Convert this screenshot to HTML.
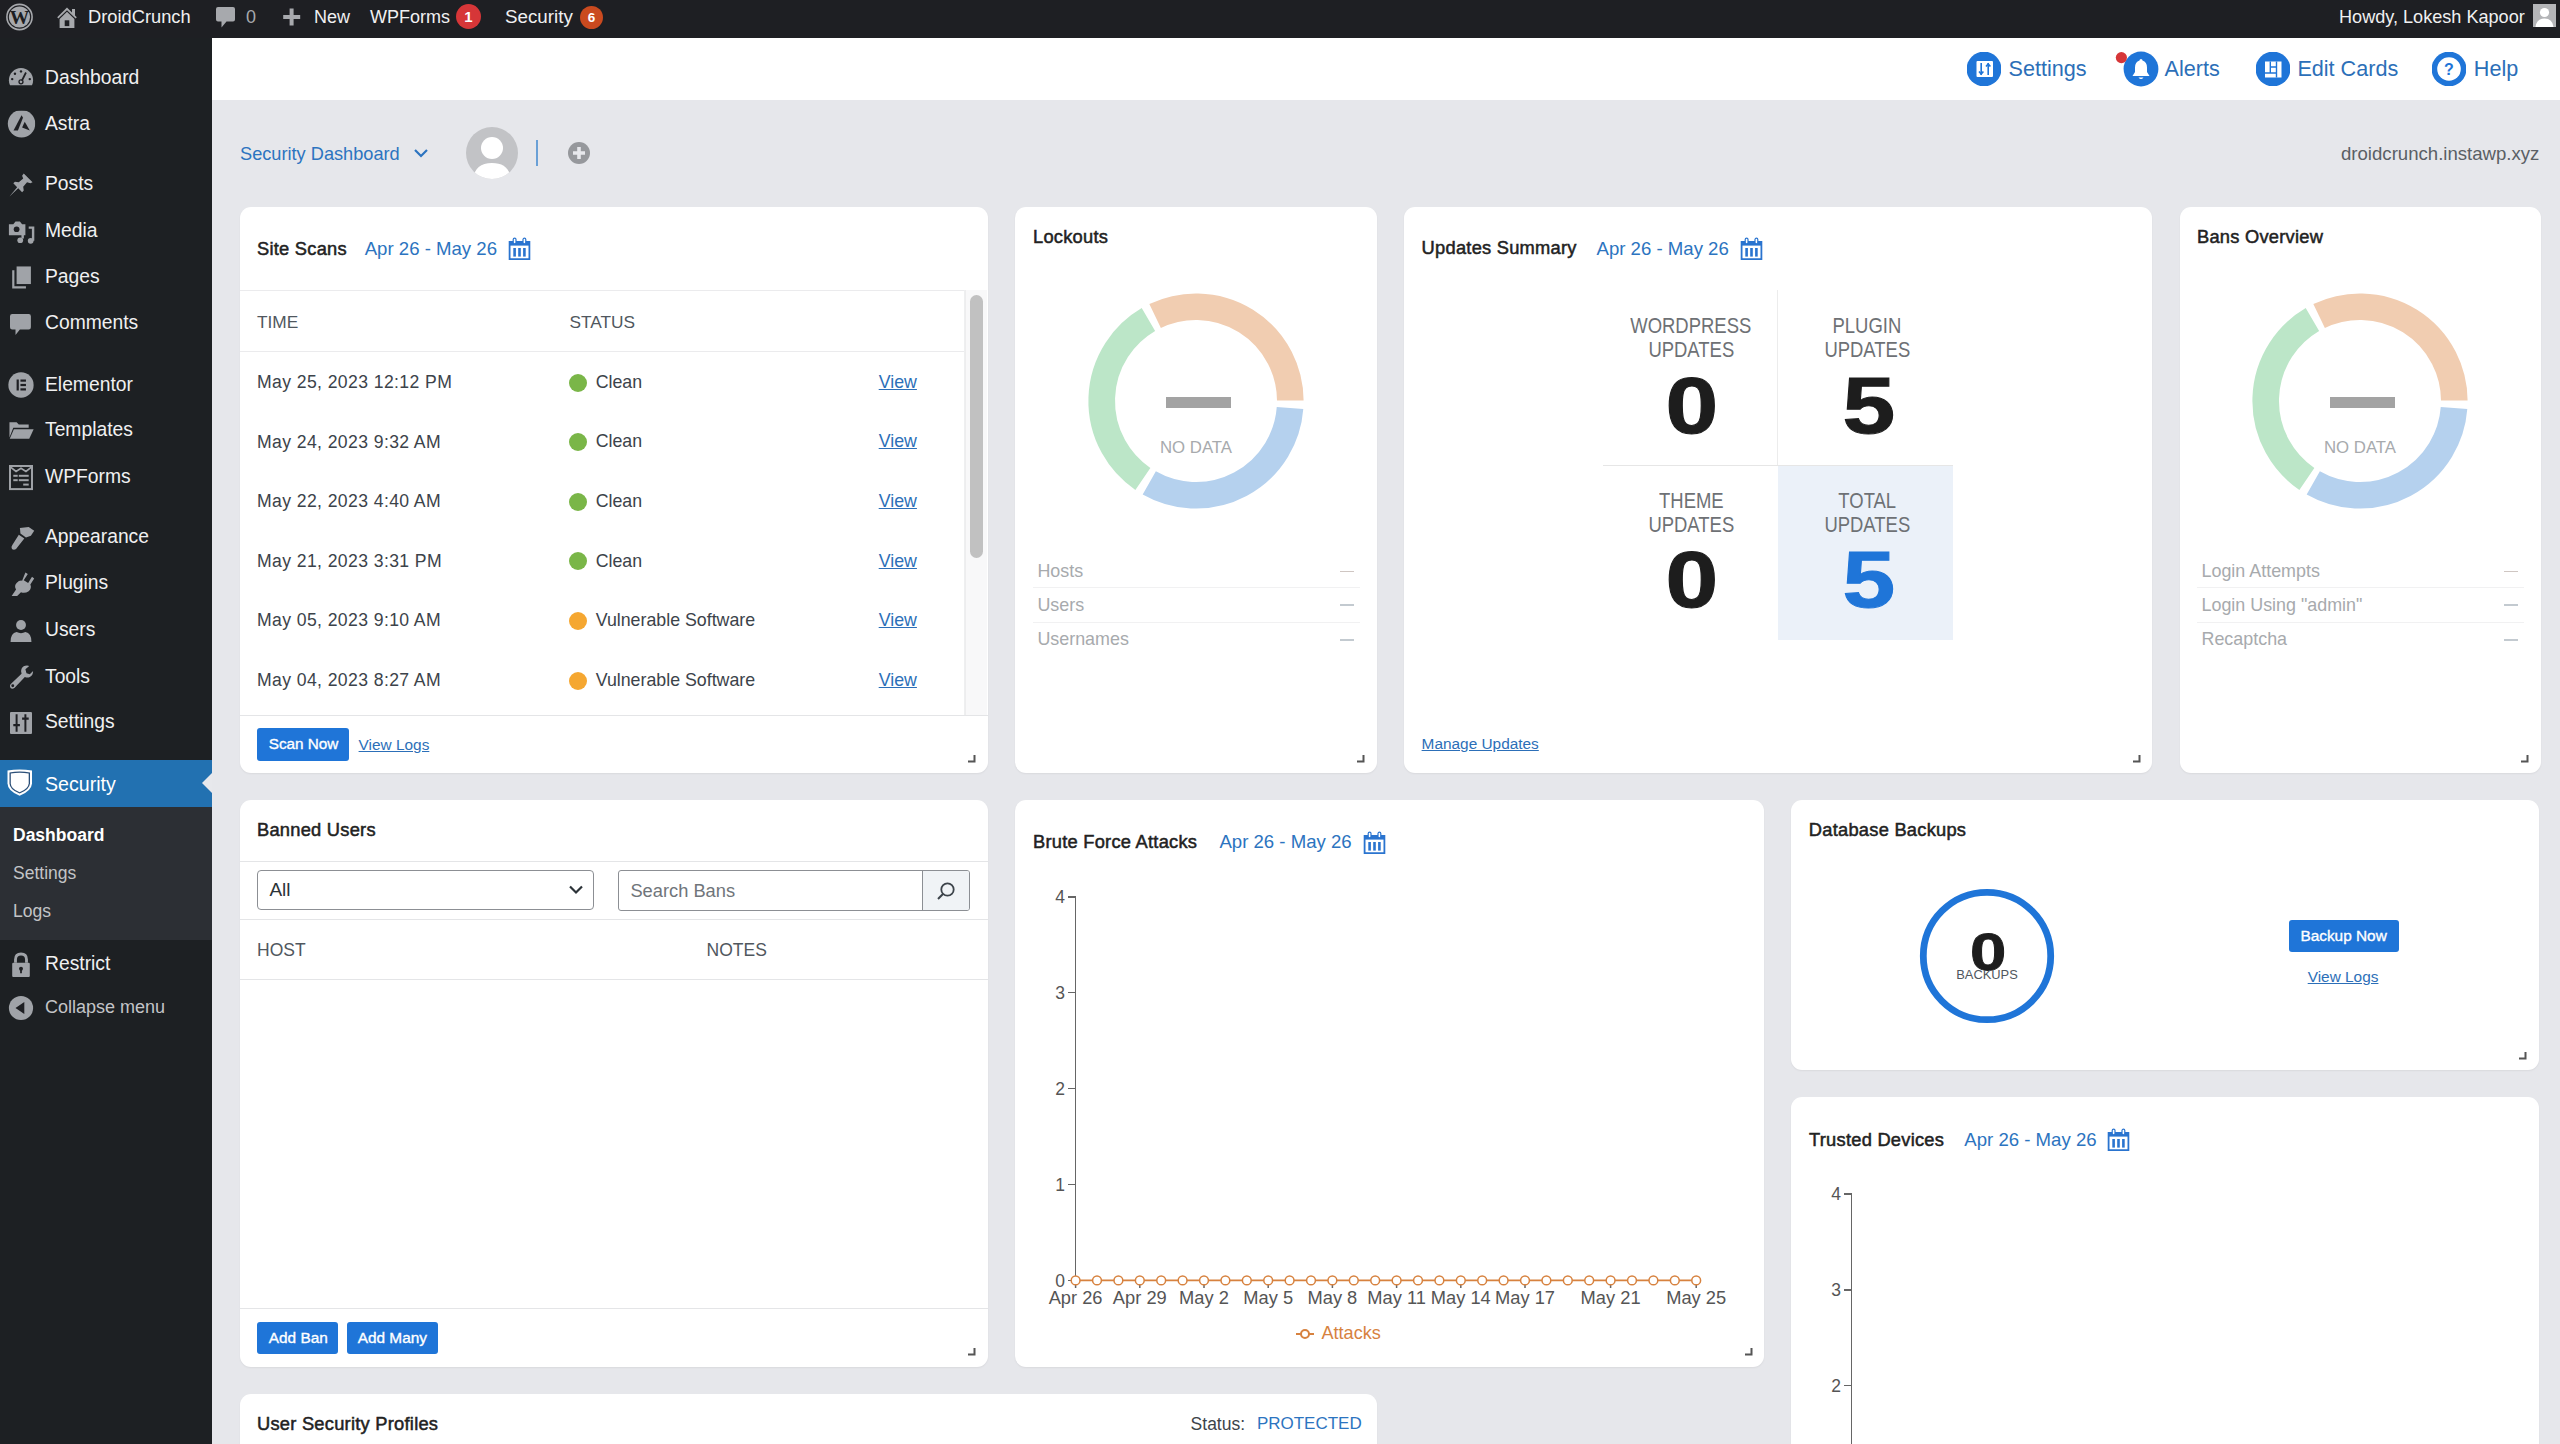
<!DOCTYPE html>
<html><head><meta charset="utf-8">
<style>
*{box-sizing:border-box;margin:0;padding:0}
html,body{width:2560px;height:1444px;overflow:hidden;background:#e6e7eb;font-family:"Liberation Sans",sans-serif;color:#1d2327}
.abs{position:absolute}
#adminbar{position:absolute;left:0;top:0;width:2560px;height:38px;background:#1e1f23;color:#f0f0f1;font-size:18px}
#adminbar .t{position:absolute;top:7px;line-height:20px;white-space:nowrap}
#sidebar{position:absolute;left:0;top:38px;width:212px;height:1406px;background:#1d2023}
.mi{position:absolute;left:45px;color:#f0f0f1;font-size:19px;line-height:22px;white-space:nowrap}
.ic{position:absolute;left:10px}
#hdr{position:absolute;left:212px;top:38px;width:2348px;height:62px;background:#fff}
.card{position:absolute;background:#fff;border-radius:11px;box-shadow:0 1px 2px rgba(0,0,0,.06)}
.ttl{position:absolute;font-weight:bold;font-size:18px;line-height:22px;color:#1d2327;white-space:nowrap}
.date{position:absolute;font-size:18.5px;line-height:22px;color:#2271b1;white-space:nowrap}
.t{white-space:nowrap}
</style></head><body>
<div id="adminbar">
<svg class="abs" style="left:5px;top:3px" width="30" height="30" viewBox="0 0 30 30"><circle cx="14.5" cy="14" r="12.6" fill="none" stroke="#a7a9ad" stroke-width="1.6"/><circle cx="14.5" cy="14" r="10.6" fill="#a7a9ad"/><text x="14.5" y="21.2" text-anchor="middle" font-family="Liberation Serif" font-weight="bold" font-size="19.5" fill="#1e1f23">W</text></svg>
<svg class="abs" style="left:56px;top:6px" width="22" height="23" viewBox="0 0 22 23"><path d="M1.2 11.2 L11 1.5 L16 6.5 V3 H19 V9.5 L20.8 11.2 L19.6 12.6 L11 4.2 L2.4 12.6 Z" fill="#a7a9ad"/><path d="M3.6 13 L11 5.8 L18.4 13 V22 H3.6 Z" fill="#a7a9ad"/><rect x="8.7" y="14.3" width="4.6" height="5.8" fill="#1e1f23"/></svg>
<div class="t" style="left:88px;top:7px;font-size:18.3px">DroidCrunch</div>
<svg class="abs" style="left:215px;top:6px" width="22" height="24" viewBox="0 0 22 24"><path d="M3 1 H18 Q20 1 20 3 V13.5 Q20 15.5 18 15.5 H11.5 L6.5 21.5 V15.5 H3 Q1 15.5 1 13.5 V3 Q1 1 3 1 Z" fill="#a7a9ad"/></svg>
<div class="t" style="left:246px;top:7px;color:#a7a9ad;font-size:18px">0</div>
<svg class="abs" style="left:282px;top:7px" width="20" height="20" viewBox="0 0 20 20"><rect x="7.6" y="1.5" width="4" height="17" fill="#a7a9ad"/><rect x="1.2" y="8" width="17" height="4" fill="#a7a9ad"/></svg>
<div class="t" style="left:314px;top:7px">New</div>
<div class="t" style="left:370px;top:7px">WPForms</div>
<div class="abs" style="left:456px;top:4px;width:25px;height:25px;border-radius:50%;background:#d63638;color:#fff;font-size:15px;font-weight:bold;line-height:25px;text-align:center">1</div>
<div class="t" style="left:505px;top:7px;font-size:18.8px">Security</div>
<div class="abs" style="left:580px;top:6px;width:23px;height:23px;border-radius:50%;background:#ca4a1f;color:#fff;font-size:13.5px;font-weight:bold;line-height:23px;text-align:center">6</div>
<div class="t" style="left:2339px;top:7px;font-size:18.1px">Howdy, Lokesh Kapoor</div>
<div class="abs" style="left:2533px;top:4px;width:23px;height:23px;background:#b4b5b8;overflow:hidden"><svg width="23" height="23" viewBox="0 0 23 23"><circle cx="11.5" cy="8.5" r="4.6" fill="#fff"/><path d="M2.5 23 Q3.5 14.5 11.5 14.5 Q19.5 14.5 20.5 23 Z" fill="#fff"/></svg></div>
</div>
<div id="sidebar"><div class="mi" style="top:28.8px;left:45px;font-size:19.3px;color:#f0f0f1;">Dashboard</div><svg class="abs" style="left:8px;top:27.4px;transform:scale(1.1)" width="26" height="26" viewBox="0 0 26 26"><path d="M13 4 A11 11 0 0 0 2 15 Q2 17.5 3 19.5 H23 Q24 17.5 24 15 A11 11 0 0 0 13 4 Z" fill="#a0a3a8"/><circle cx="13" cy="7" r="1.1" fill="#1e1f23"/><circle cx="7.5" cy="9.2" r="1.1" fill="#1e1f23"/><circle cx="5" cy="14" r="1.1" fill="#1e1f23"/><circle cx="21" cy="14" r="1.1" fill="#1e1f23"/><path d="M17.5 8 L13.8 15.5" stroke="#1e1f23" stroke-width="1.6"/><circle cx="13" cy="16.5" r="1.8" fill="none" stroke="#1e1f23" stroke-width="1.2"/></svg><div class="mi" style="top:75.0px;left:45px;font-size:19.3px;color:#f0f0f1;">Astra</div><svg class="abs" style="left:8px;top:73.6px;transform:scale(1.1)" width="26" height="26" viewBox="0 0 26 26"><circle cx="13.5" cy="11.9" r="12.5" fill="#a0a3a8"/><path d="M6.2 17.9 L10.2 17.9 L14.8 6.5 L13.5 4.1 Z" fill="#1e1f23"/><path d="M16.4 10.1 L14 15.2 L21 17.9 Z" fill="#1e1f23"/></svg><div class="mi" style="top:135.4px;left:45px;font-size:19.3px;color:#f0f0f1;">Posts</div><svg class="abs" style="left:8px;top:134.0px;transform:scale(1.1)" width="26" height="26" viewBox="0 0 26 26"><path d="M15.5 2.5 L23.5 10.5 L21.5 11.5 L18.5 10.5 L15 14.5 L15.5 18 L14 19.5 L10.5 16 L3 23 L2.5 23.5 L9.5 15 L6 11.5 L7.5 10 L11 10.5 L15 7 L14 4.5 Z" fill="#a0a3a8"/></svg><div class="mi" style="top:181.9px;left:45px;font-size:19.3px;color:#f0f0f1;">Media</div><svg class="abs" style="left:8px;top:180.5px;transform:scale(1.1)" width="26" height="26" viewBox="0 0 26 26"><path d="M2 6 H6 L8 3.5 H12 L14 6 H17 V16 H2 Z" fill="#a0a3a8"/><circle cx="9" cy="10.5" r="2.6" fill="#1e1f23"/><path d="M20 9 H24 V21" stroke="#a0a3a8" stroke-width="2.2" fill="none"/><circle cx="21.8" cy="21" r="2.6" fill="#a0a3a8"/><path d="M14.5 13 V19" stroke="#a0a3a8" stroke-width="2.2"/><circle cx="12.3" cy="20.5" r="2.6" fill="#a0a3a8"/></svg><div class="mi" style="top:228.4px;left:45px;font-size:19.3px;color:#f0f0f1;">Pages</div><svg class="abs" style="left:8px;top:227.0px;transform:scale(1.1)" width="26" height="26" viewBox="0 0 26 26"><rect x="9" y="2.5" width="13" height="16" fill="#a0a3a8"/><path d="M5 6 V22.5 H17.5 V20.5 H7 V6 Z" fill="#a0a3a8"/></svg><div class="mi" style="top:273.9px;left:45px;font-size:19.3px;color:#f0f0f1;">Comments</div><svg class="abs" style="left:8px;top:272.5px;transform:scale(1.1)" width="26" height="26" viewBox="0 0 26 26"><path d="M5 4 H20 Q22 4 22 6 V16 Q22 18 20 18 H12 L8 23 V18 H5 Q3 18 3 16 V6 Q3 4 5 4 Z" fill="#a0a3a8"/></svg><div class="mi" style="top:335.7px;left:45px;font-size:19.3px;color:#f0f0f1;">Elementor</div><svg class="abs" style="left:8px;top:334.3px;transform:scale(1.1)" width="26" height="26" viewBox="0 0 26 26"><circle cx="13" cy="13" r="11.5" fill="#a0a3a8"/><rect x="9" y="8" width="2" height="10" fill="#1e1f23"/><rect x="12.5" y="8" width="5" height="2" fill="#1e1f23"/><rect x="12.5" y="12" width="5" height="2" fill="#1e1f23"/><rect x="12.5" y="16" width="5" height="2" fill="#1e1f23"/></svg><div class="mi" style="top:381.2px;left:45px;font-size:19.3px;color:#f0f0f1;">Templates</div><svg class="abs" style="left:8px;top:379.8px;transform:scale(1.1)" width="26" height="26" viewBox="0 0 26 26"><path d="M2.5 5 H9 L11 7 H20 V10 H6 L2.5 19 Z" fill="#a0a3a8"/><path d="M6.5 11.5 H24.5 L20.5 20 H2.8 Z" fill="#a0a3a8"/></svg><div class="mi" style="top:427.8px;left:45px;font-size:19.3px;color:#f0f0f1;">WPForms</div><svg class="abs" style="left:8px;top:426.4px;transform:scale(1.1)" width="26" height="26" viewBox="0 0 26 26"><rect x="3" y="3" width="20" height="21" fill="none" stroke="#a0a3a8" stroke-width="1.8"/><path d="M3.5 4 L8.5 8 L13 5 L17.5 8 L22.5 4" stroke="#a0a3a8" stroke-width="1.6" fill="none"/><rect x="6" y="11" width="4" height="1.8" fill="#a0a3a8"/><rect x="11" y="11" width="9" height="1.8" fill="#a0a3a8"/><rect x="6" y="15" width="4" height="1.8" fill="#a0a3a8"/><rect x="11" y="15" width="9" height="1.8" fill="#a0a3a8"/><rect x="15" y="19" width="5" height="1.8" fill="#a0a3a8"/></svg><div class="mi" style="top:488.4px;left:45px;font-size:19.3px;color:#f0f0f1;">Appearance</div><svg class="abs" style="left:8px;top:487.0px;transform:scale(1.1)" width="26" height="26" viewBox="0 0 26 26"><path d="M12 4 L20 3 L25 6.5 L22 11 L17.5 12.5 L12.5 9 Z" fill="#a0a3a8"/><path d="M11 10 L16 13.5 L8.5 23 Q6.5 24.5 4.8 23 Q3.5 21.5 5 19.5 Z" fill="#a0a3a8"/></svg><div class="mi" style="top:534.4px;left:45px;font-size:19.3px;color:#f0f0f1;">Plugins</div><svg class="abs" style="left:8px;top:533.0px;transform:scale(1.1)" width="26" height="26" viewBox="0 0 26 26"><path d="M17 2.5 L19.2 4 L15.5 9.5 L19.5 12 L23 6.5 L25 8 L21.5 13.5 Q23 17 20 19.5 Q16.5 22 13 20.5 L9.5 24 H4.5 L8.5 18 Q6.5 14.5 9 12 Q11.5 9.5 14 10 Z" fill="#a0a3a8"/></svg><div class="mi" style="top:581.0px;left:45px;font-size:19.3px;color:#f0f0f1;">Users</div><svg class="abs" style="left:8px;top:579.6px;transform:scale(1.1)" width="26" height="26" viewBox="0 0 26 26"><circle cx="13" cy="7.5" r="4.5" fill="#a0a3a8"/><path d="M3.5 23 Q3.5 15 9 14 Q13 16 17 14 Q22.5 15 22.5 23 Z" fill="#a0a3a8"/></svg><div class="mi" style="top:627.8px;left:45px;font-size:19.3px;color:#f0f0f1;">Tools</div><svg class="abs" style="left:8px;top:626.4px;transform:scale(1.1)" width="26" height="26" viewBox="0 0 26 26"><path d="M18.5 2.5 Q15 2.5 13.5 5.5 Q12.5 8 13.5 10 L3.5 19.5 Q2 21.5 3.5 23 Q5 24.5 7 23 L16.5 13 Q19 14 21 13 Q24 11.5 24 7.5 L21 10.5 L18 9.5 L17 6 L20.5 3 Z" fill="#a0a3a8"/><circle cx="5.5" cy="21" r="1.3" fill="#1e1f23"/></svg><div class="mi" style="top:673.1px;left:45px;font-size:19.3px;color:#f0f0f1;">Settings</div><svg class="abs" style="left:8px;top:671.7px;transform:scale(1.1)" width="26" height="26" viewBox="0 0 26 26"><rect x="3" y="3" width="20" height="20" rx="1" fill="#a0a3a8"/><path d="M9 5 V21 M17 5 V21" stroke="#1e1f23" stroke-width="1.8"/><path d="M6 15 H12 M14 9 H20" stroke="#1e1f23" stroke-width="2"/></svg><div class="abs" style="left:0;top:722px;width:212px;height:47px;background:#2271b1"></div><div class="abs" style="left:202px;top:735px;width:0;height:0;border-top:10px solid transparent;border-bottom:10px solid transparent;border-right:10px solid #e7e8ec"></div><svg class="abs" style="left:7px;top:730px" width="26" height="29" viewBox="0 0 26 29"><path d="M0.5 2.6 Q12.6 0.4 25 2.6 V15.5 Q24.5 23 12.6 27.8 Q0.7 23 0.5 15.5 Z" fill="#fff"/><path d="M2.5 4.4 Q12.6 2.6 23 4.4 V15.5 Q22.6 21.6 12.6 25.6 Q2.6 21.6 2.5 15.5 Z" fill="#2b4f78"/><path d="M3.8 5.6 Q12.6 4 21.7 5.6 V15.4 Q21.3 20.8 12.6 24.2 Q3.9 20.8 3.8 15.4 Z" fill="#fff"/></svg><div class="mi" style="top:735.4px;left:45px;font-size:19.6px;color:#fff;">Security</div><div class="abs" style="left:0;top:769px;width:212px;height:133px;background:#2c2f34"></div><div class="mi" style="top:785.9px;left:13px;font-size:17.5px;color:#fff;font-weight:bold;">Dashboard</div><div class="mi" style="top:823.9px;left:13px;font-size:17.5px;color:#c3c4c7;">Settings</div><div class="mi" style="top:861.9px;left:13px;font-size:17.5px;color:#c3c4c7;">Logs</div><div class="mi" style="top:915.0px;left:45px;font-size:19.3px;color:#f0f0f1;">Restrict</div><svg class="abs" style="left:8px;top:913.6px;transform:scale(1.1)" width="26" height="26" viewBox="0 0 26 26"><path d="M8 11 V8 Q8 3 13 3 Q18 3 18 8 V11" fill="none" stroke="#a0a3a8" stroke-width="2.6"/><rect x="5" y="11" width="16" height="13" rx="1" fill="#a0a3a8"/><circle cx="13" cy="16.5" r="1.8" fill="#1e1f23"/><rect x="12.2" y="16.5" width="1.6" height="4" fill="#1e1f23"/></svg><div class="mi" style="top:958.2px;left:45px;font-size:18px;color:#c3c4c7;">Collapse menu</div><svg class="abs" style="left:8px;top:956.8px;transform:scale(1.1)" width="26" height="26" viewBox="0 0 26 26"><circle cx="13" cy="13" r="11" fill="#a0a3a8"/><path d="M16 7.5 V18.5 L8 13 Z" fill="#1e1f23"/></svg></div>
<div id="hdr"></div><svg class="abs" style="left:1967px;top:52px" width="34" height="34" viewBox="0 0 34 34"><circle cx="17" cy="17" r="17.4" fill="#1f75d8"/><rect x="9.5" y="9" width="16.5" height="16" rx="1" fill="#fff"/><path d="M14.2 11 V23 M21.2 11 V23" stroke="#1f75d8" stroke-width="1.6"/><path d="M12 19.5 L14.2 22 L16.4 19.5 M19 14.5 L21.2 12 L23.4 14.5" stroke="#1f75d8" stroke-width="1.6" fill="none"/></svg><div class="abs t" style="left:2008.6px;top:58.4px;font-size:21.6px;line-height:22px;color:#2c6fb8;">Settings</div><svg class="abs" style="left:2115px;top:51px" width="44" height="36" viewBox="0 0 44 36"><circle cx="26" cy="18" r="17.4" fill="#1f75d8"/><circle cx="6.4" cy="6.6" r="5.6" fill="#d63638"/><path d="M26 8 Q27.5 8 27.5 9.5 Q32 11 32 16.5 V21 L34.5 25 H17.5 L20 21 V16.5 Q20 11 24.5 9.5 Q24.5 8 26 8 Z" fill="#fff"/><path d="M23.5 26.5 Q26 29.5 28.5 26.5 Z" fill="#fff"/></svg><div class="abs t" style="left:2164.5px;top:58.4px;font-size:21.6px;line-height:22px;color:#2c6fb8;">Alerts</div><svg class="abs" style="left:2256px;top:52px" width="34" height="34" viewBox="0 0 34 34"><circle cx="17" cy="17" r="17.4" fill="#1f75d8"/><rect x="9" y="9.5" width="16.5" height="16" fill="#fff"/><path d="M14.3 9.5 V21 M20.5 9.5 V25.5 M9 21 H20.5 M14.3 15 H20.5" stroke="#1f75d8" stroke-width="1.4"/></svg><div class="abs t" style="left:2297.4px;top:58.4px;font-size:21.6px;line-height:22px;color:#2c6fb8;">Edit Cards</div><svg class="abs" style="left:2432px;top:52px" width="34" height="34" viewBox="0 0 34 34"><circle cx="17" cy="17" r="17.4" fill="#1f75d8"/><circle cx="17" cy="17" r="11.8" fill="#fff"/><text x="17" y="22.8" text-anchor="middle" font-family="Liberation Sans" font-weight="bold" font-size="16" fill="#1f75d8">?</text></svg><div class="abs t" style="left:2473.8px;top:58.4px;font-size:21.6px;line-height:22px;color:#2c6fb8;">Help</div><div class="abs t" style="left:240px;top:142.5px;font-size:18.2px;line-height:22px;color:#2c74c0;">Security Dashboard</div><svg class="abs" style="left:413px;top:147px" width="16" height="12" viewBox="0 0 16 12"><path d="M2 3 L8 9 L14 3" stroke="#2c74c0" stroke-width="2.2" fill="none"/></svg><svg class="abs" style="left:466px;top:127px" width="52" height="52" viewBox="0 0 52 52"><defs><clipPath id="av"><circle cx="26" cy="26" r="26"/></clipPath></defs><circle cx="26" cy="26" r="26" fill="#c2c3c6"/><g clip-path="url(#av)"><circle cx="26" cy="21" r="11" fill="#fff"/><path d="M7 52 Q9 36 26 36 Q43 36 45 52 Z" fill="#fff"/></g></svg><div class="abs" style="left:536px;top:140px;width:1.6px;height:26px;background:#6aa0d6"></div><svg class="abs" style="left:567px;top:141px" width="24" height="24" viewBox="0 0 24 24"><circle cx="12" cy="12" r="11" fill="#96989c"/><path d="M12 6 V18 M6 12 H18" stroke="#e7e8ec" stroke-width="3.6"/></svg><div class="abs t" style="left:2341px;top:142.6px;font-size:18.6px;line-height:22px;color:#5a5f65;">droidcrunch.instawp.xyz</div>
<!-- cards -->
<div class="card" style="left:240px;top:207px;width:748px;height:566px"></div>
<div class="abs ttl" style="left:257px;top:237.6px;font-size:18.3px;line-height:22px;color:#222;font-weight:normal;letter-spacing:0.25px;-webkit-text-stroke:0.5px #222">Site Scans</div><div class="abs date" style="left:364.7px;top:238.1px;font-size:18.6px;line-height:22px;color:#2c74c0;">Apr 26 - May 26</div><svg class="abs" style="left:508px;top:237px" width="23" height="23" viewBox="0 0 23 23"><path d="M1.6 5 H21.4 V22.2 H1.6 Z" fill="none" stroke="#2a74cf" stroke-width="1.8"/><rect x="1.6" y="5" width="19.8" height="3.6" fill="#2a74cf"/><rect x="5.2" y="1.2" width="2.8" height="5.6" rx="1.4" fill="#fff" stroke="#2a74cf" stroke-width="1.2"/><rect x="15" y="1.2" width="2.8" height="5.6" rx="1.4" fill="#fff" stroke="#2a74cf" stroke-width="1.2"/><rect x="5.3" y="11" width="2.6" height="8.6" fill="#2a74cf"/><rect x="10.2" y="11" width="2.6" height="8.6" fill="#2a74cf"/><rect x="15.1" y="11" width="2.6" height="8.6" fill="#2a74cf"/></svg><div class="abs" style="left:240px;top:290px;width:724px;height:1px;background:#ebebed"></div><div class="abs" style="left:964px;top:290px;width:1px;height:425px;background:#eeeff0"></div><div class="abs" style="left:240px;top:351px;width:724px;height:1px;background:#ebebed"></div><div class="abs" style="left:965px;top:290px;width:22px;height:425px;background:#f8f8f9;border-left:1px solid #ededee"></div><div class="abs" style="left:970px;top:295px;width:13px;height:263px;border-radius:7px;background:#c1c1c1"></div><div class="abs t" style="left:257px;top:310.7px;font-size:17.3px;line-height:22px;color:#50575e;">TIME</div><div class="abs t" style="left:569.5px;top:310.7px;font-size:17.3px;line-height:22px;color:#50575e;">STATUS</div><div class="abs t" style="left:257px;top:370.9px;font-size:17.6px;line-height:22px;color:#3c434a;letter-spacing:0.4px">May 25, 2023 12:12 PM</div><div class="abs" style="left:569px;top:373.5px;width:18px;height:18px;border-radius:50%;background:#7ab648"></div><div class="abs t" style="left:595.7px;top:370.8px;font-size:17.8px;line-height:22px;color:#3c434a;">Clean</div><div class="abs t" style="left:878.7px;top:370.8px;font-size:17.8px;line-height:22px;color:#2c6fb8;text-decoration:underline">View</div><div class="abs t" style="left:257px;top:430.5px;font-size:17.6px;line-height:22px;color:#3c434a;letter-spacing:0.4px">May 24, 2023 9:32 AM</div><div class="abs" style="left:569px;top:433.1px;width:18px;height:18px;border-radius:50%;background:#7ab648"></div><div class="abs t" style="left:595.7px;top:430.4px;font-size:17.8px;line-height:22px;color:#3c434a;">Clean</div><div class="abs t" style="left:878.7px;top:430.4px;font-size:17.8px;line-height:22px;color:#2c6fb8;text-decoration:underline">View</div><div class="abs t" style="left:257px;top:490.1px;font-size:17.6px;line-height:22px;color:#3c434a;letter-spacing:0.4px">May 22, 2023 4:40 AM</div><div class="abs" style="left:569px;top:492.7px;width:18px;height:18px;border-radius:50%;background:#7ab648"></div><div class="abs t" style="left:595.7px;top:490.0px;font-size:17.8px;line-height:22px;color:#3c434a;">Clean</div><div class="abs t" style="left:878.7px;top:490.0px;font-size:17.8px;line-height:22px;color:#2c6fb8;text-decoration:underline">View</div><div class="abs t" style="left:257px;top:549.7px;font-size:17.6px;line-height:22px;color:#3c434a;letter-spacing:0.4px">May 21, 2023 3:31 PM</div><div class="abs" style="left:569px;top:552.3px;width:18px;height:18px;border-radius:50%;background:#7ab648"></div><div class="abs t" style="left:595.7px;top:549.6px;font-size:17.8px;line-height:22px;color:#3c434a;">Clean</div><div class="abs t" style="left:878.7px;top:549.6px;font-size:17.8px;line-height:22px;color:#2c6fb8;text-decoration:underline">View</div><div class="abs t" style="left:257px;top:609.3px;font-size:17.6px;line-height:22px;color:#3c434a;letter-spacing:0.4px">May 05, 2023 9:10 AM</div><div class="abs" style="left:569px;top:611.9px;width:18px;height:18px;border-radius:50%;background:#f5a731"></div><div class="abs t" style="left:595.7px;top:609.2px;font-size:17.8px;line-height:22px;color:#3c434a;">Vulnerable Software</div><div class="abs t" style="left:878.7px;top:609.2px;font-size:17.8px;line-height:22px;color:#2c6fb8;text-decoration:underline">View</div><div class="abs t" style="left:257px;top:668.9px;font-size:17.6px;line-height:22px;color:#3c434a;letter-spacing:0.4px">May 04, 2023 8:27 AM</div><div class="abs" style="left:569px;top:671.5px;width:18px;height:18px;border-radius:50%;background:#f5a731"></div><div class="abs t" style="left:595.7px;top:668.8px;font-size:17.8px;line-height:22px;color:#3c434a;">Vulnerable Software</div><div class="abs t" style="left:878.7px;top:668.8px;font-size:17.8px;line-height:22px;color:#2c6fb8;text-decoration:underline">View</div><div class="abs" style="left:240px;top:715px;width:748px;height:1px;background:#e4e5e7"></div><div class="abs" style="left:257px;top:728px;width:92px;height:33px;border-radius:3px;background:#1f75d8"></div><div class="abs t" style="left:268.7px;top:732.9px;font-size:15.3px;line-height:22px;color:#fff;-webkit-text-stroke:0.35px #fff">Scan Now</div><div class="abs t" style="left:358.6px;top:734.2px;font-size:15.4px;line-height:22px;color:#2c6fb8;text-decoration:underline">View Logs</div><svg class="abs" style="left:966px;top:753px" width="10" height="10" viewBox="0 0 10 10"><path d="M8.5 2 V8.5 H2" stroke="#555" stroke-width="2" fill="none"/></svg>
<div class="card" style="left:1015px;top:207px;width:362px;height:566px"></div>
<div class="card" style="left:1404px;top:207px;width:748px;height:566px"></div>
<div class="card" style="left:2180px;top:207px;width:361px;height:566px"></div>
<div class="abs ttl" style="left:1033px;top:225.9px;font-size:18.3px;line-height:22px;color:#222;font-weight:normal;letter-spacing:0.25px;-webkit-text-stroke:0.5px #222">Lockouts</div><svg class="abs" style="left:1076.0px;top:281.0px" width="240" height="240" viewBox="0 0 240 240"><path d="M79.11 35.03 A94.3 94.3 0 0 1 214.30 119.51" stroke="#f1cdb1" stroke-width="26.6" fill="none"/><path d="M214.03 127.07 A94.3 94.3 0 0 1 73.28 201.91" stroke="#b5d1ee" stroke-width="26.6" fill="none"/><path d="M66.86 197.90 A94.3 94.3 0 0 1 72.42 38.58" stroke="#bce6c8" stroke-width="26.6" fill="none"/></svg><div class="abs" style="left:1166px;top:397px;width:65px;height:11px;background:#a3a3a3"></div><div class="abs t" style="left:1046.0px;top:437.0px;width:300px;text-align:center;font-size:16.8px;line-height:22px;color:#a7aaad;">NO DATA</div><div class="abs t" style="left:1037.4px;top:559.8px;font-size:17.9px;line-height:22px;color:#a7aaad;">Hosts</div><div class="abs" style="left:1340px;top:570.5px;width:14px;height:1.5px;background:#cfc6c2"></div><div class="abs t" style="left:1037.4px;top:593.6px;font-size:17.9px;line-height:22px;color:#a7aaad;">Users</div><div class="abs" style="left:1340px;top:604.3px;width:14px;height:1.5px;background:#c3cad0"></div><div class="abs t" style="left:1037.4px;top:628.4px;font-size:17.9px;line-height:22px;color:#a7aaad;">Usernames</div><div class="abs" style="left:1340px;top:639.1px;width:14px;height:1.5px;background:#c3cad0"></div><div class="abs" style="left:1033px;top:587px;width:327px;height:1px;background:#f1f1f2"></div><div class="abs" style="left:1033px;top:622px;width:327px;height:1px;background:#f1f1f2"></div><svg class="abs" style="left:1355px;top:753px" width="10" height="10" viewBox="0 0 10 10"><path d="M8.5 2 V8.5 H2" stroke="#555" stroke-width="2" fill="none"/></svg><div class="abs ttl" style="left:2197px;top:225.9px;font-size:18.3px;line-height:22px;color:#222;font-weight:normal;letter-spacing:0.25px;-webkit-text-stroke:0.5px #222">Bans Overview</div><svg class="abs" style="left:2240.0px;top:281.0px" width="240" height="240" viewBox="0 0 240 240"><path d="M79.11 35.03 A94.3 94.3 0 0 1 214.30 119.51" stroke="#f1cdb1" stroke-width="26.6" fill="none"/><path d="M214.03 127.07 A94.3 94.3 0 0 1 73.28 201.91" stroke="#b5d1ee" stroke-width="26.6" fill="none"/><path d="M66.86 197.90 A94.3 94.3 0 0 1 72.42 38.58" stroke="#bce6c8" stroke-width="26.6" fill="none"/></svg><div class="abs" style="left:2330px;top:397px;width:65px;height:11px;background:#a3a3a3"></div><div class="abs t" style="left:2210.0px;top:437.0px;width:300px;text-align:center;font-size:16.8px;line-height:22px;color:#a7aaad;">NO DATA</div><div class="abs t" style="left:2201.5px;top:559.8px;font-size:17.9px;line-height:22px;color:#a7aaad;">Login Attempts</div><div class="abs" style="left:2504px;top:570.5px;width:14px;height:1.5px;background:#cfc6c2"></div><div class="abs t" style="left:2201.5px;top:593.6px;font-size:17.9px;line-height:22px;color:#a7aaad;">Login Using "admin"</div><div class="abs" style="left:2504px;top:604.3px;width:14px;height:1.5px;background:#c3cad0"></div><div class="abs t" style="left:2201.5px;top:628.4px;font-size:17.9px;line-height:22px;color:#a7aaad;">Recaptcha</div><div class="abs" style="left:2504px;top:639.1px;width:14px;height:1.5px;background:#c3cad0"></div><div class="abs" style="left:2197px;top:587px;width:327px;height:1px;background:#f1f1f2"></div><div class="abs" style="left:2197px;top:622px;width:327px;height:1px;background:#f1f1f2"></div><svg class="abs" style="left:2519px;top:753px" width="10" height="10" viewBox="0 0 10 10"><path d="M8.5 2 V8.5 H2" stroke="#555" stroke-width="2" fill="none"/></svg><div class="abs ttl" style="left:1421.6px;top:237.1px;font-size:18.3px;line-height:22px;color:#222;font-weight:normal;letter-spacing:0.25px;-webkit-text-stroke:0.5px #222">Updates Summary</div><div class="abs date" style="left:1596.5px;top:238.1px;font-size:18.6px;line-height:22px;color:#2c74c0;">Apr 26 - May 26</div><svg class="abs" style="left:1740px;top:237px" width="23" height="23" viewBox="0 0 23 23"><path d="M1.6 5 H21.4 V22.2 H1.6 Z" fill="none" stroke="#2a74cf" stroke-width="1.8"/><rect x="1.6" y="5" width="19.8" height="3.6" fill="#2a74cf"/><rect x="5.2" y="1.2" width="2.8" height="5.6" rx="1.4" fill="#fff" stroke="#2a74cf" stroke-width="1.2"/><rect x="15" y="1.2" width="2.8" height="5.6" rx="1.4" fill="#fff" stroke="#2a74cf" stroke-width="1.2"/><rect x="5.3" y="11" width="2.6" height="8.6" fill="#2a74cf"/><rect x="10.2" y="11" width="2.6" height="8.6" fill="#2a74cf"/><rect x="15.1" y="11" width="2.6" height="8.6" fill="#2a74cf"/></svg><div class="abs" style="left:1778px;top:465px;width:175px;height:175px;background:#ebf1f9"></div><div class="abs" style="left:1777px;top:290px;width:1px;height:175px;background:#ececec"></div><div class="abs" style="left:1603px;top:465px;width:350px;height:1px;background:#e6e6e6"></div><div class="abs t lbl" style="left:1606px;top:314.5px;width:170px;text-align:center;font-size:22.5px;line-height:22px;color:#6e7175"><span style="display:inline-block;transform:scaleX(0.82)">WORDPRESS</span></div><div class="abs t lbl" style="left:1606px;top:338.6px;width:170px;text-align:center;font-size:22.5px;line-height:22px;color:#6e7175"><span style="display:inline-block;transform:scaleX(0.82)">UPDATES</span></div><div class="abs t bignum" style="left:1607px;top:365.5px;width:170px;text-align:center;font-size:79px;line-height:79px;height:86.9px;font-weight:bold;color:#1d1d1d;-webkit-text-stroke:1px #1d1d1d"><span style="display:inline-block;transform:scaleX(1.2)">0</span></div><div class="abs t lbl" style="left:1782px;top:314.5px;width:170px;text-align:center;font-size:22.5px;line-height:22px;color:#6e7175"><span style="display:inline-block;transform:scaleX(0.82)">PLUGIN</span></div><div class="abs t lbl" style="left:1782px;top:338.6px;width:170px;text-align:center;font-size:22.5px;line-height:22px;color:#6e7175"><span style="display:inline-block;transform:scaleX(0.82)">UPDATES</span></div><div class="abs t bignum" style="left:1784px;top:365.5px;width:170px;text-align:center;font-size:79px;line-height:79px;height:86.9px;font-weight:bold;color:#1d1d1d;-webkit-text-stroke:1px #1d1d1d"><span style="display:inline-block;transform:scaleX(1.2)">5</span></div><div class="abs t lbl" style="left:1606px;top:489.9px;width:170px;text-align:center;font-size:22.5px;line-height:22px;color:#6e7175"><span style="display:inline-block;transform:scaleX(0.82)">THEME</span></div><div class="abs t lbl" style="left:1606px;top:513.9px;width:170px;text-align:center;font-size:22.5px;line-height:22px;color:#6e7175"><span style="display:inline-block;transform:scaleX(0.82)">UPDATES</span></div><div class="abs t bignum" style="left:1607px;top:540.0px;width:170px;text-align:center;font-size:79px;line-height:79px;height:86.9px;font-weight:bold;color:#1d1d1d;-webkit-text-stroke:1px #1d1d1d"><span style="display:inline-block;transform:scaleX(1.2)">0</span></div><div class="abs t lbl" style="left:1782px;top:489.9px;width:170px;text-align:center;font-size:22.5px;line-height:22px;color:#6e7175"><span style="display:inline-block;transform:scaleX(0.82)">TOTAL</span></div><div class="abs t lbl" style="left:1782px;top:513.9px;width:170px;text-align:center;font-size:22.5px;line-height:22px;color:#6e7175"><span style="display:inline-block;transform:scaleX(0.82)">UPDATES</span></div><div class="abs t bignum" style="left:1784px;top:540.0px;width:170px;text-align:center;font-size:79px;line-height:79px;height:86.9px;font-weight:bold;color:#1f75d8;-webkit-text-stroke:1px #1f75d8"><span style="display:inline-block;transform:scaleX(1.2)">5</span></div><div class="abs t" style="left:1421.6px;top:732.5px;font-size:15.4px;line-height:22px;color:#2c6fb8;text-decoration:underline">Manage Updates</div><svg class="abs" style="left:2131px;top:753px" width="10" height="10" viewBox="0 0 10 10"><path d="M8.5 2 V8.5 H2" stroke="#555" stroke-width="2" fill="none"/></svg>
<div class="card" style="left:240px;top:800px;width:748px;height:567px"></div>
<div class="card" style="left:1015px;top:800px;width:749px;height:567px"></div>
<div class="card" style="left:1791px;top:800px;width:748px;height:270px"></div>
<div class="card" style="left:1791px;top:1097px;width:748px;height:400px"></div>
<div class="card" style="left:240px;top:1394px;width:1137px;height:100px"></div>
<div class="abs ttl" style="left:257px;top:819.0px;font-size:18.3px;line-height:22px;color:#222;font-weight:normal;letter-spacing:0.25px;-webkit-text-stroke:0.5px #222">Banned Users</div><div class="abs" style="left:240px;top:861px;width:748px;height:1px;background:#e4e5e7"></div><div class="abs" style="left:240px;top:919px;width:748px;height:1px;background:#e4e5e7"></div><div class="abs" style="left:240px;top:979px;width:748px;height:1px;background:#e4e5e7"></div><div class="abs" style="left:257px;top:870px;width:337px;height:40px;border:1px solid #8c8f94;border-radius:4px"></div><div class="abs t" style="left:269.4px;top:879.0px;font-size:19px;line-height:22px;color:#2c3338;">All</div><svg class="abs" style="left:567px;top:883px" width="18" height="14" viewBox="0 0 18 14"><path d="M3 3.5 L9 9.5 L15 3.5" stroke="#2c3338" stroke-width="2.2" fill="none"/></svg><div class="abs" style="left:618px;top:870px;width:352px;height:41px;border:1px solid #8c8f94;border-radius:3px;overflow:hidden"><div class="abs" style="left:303px;top:0;width:48px;height:39px;background:#f0f3f6;border-left:1px solid #8c8f94"></div></div><div class="abs t" style="left:630.4px;top:880.2px;font-size:18.3px;line-height:22px;color:#70757a;">Search Bans</div><svg class="abs" style="left:934px;top:879px" width="24" height="24" viewBox="0 0 24 24"><circle cx="13.5" cy="10.5" r="6.2" fill="none" stroke="#3c434a" stroke-width="1.8"/><path d="M9.2 14.8 L4 20" stroke="#3c434a" stroke-width="2" /></svg><div class="abs t" style="left:257px;top:938.9px;font-size:17.5px;line-height:22px;color:#50575e;">HOST</div><div class="abs t" style="left:706.6px;top:938.9px;font-size:17.5px;line-height:22px;color:#50575e;">NOTES</div><div class="abs" style="left:240px;top:1308px;width:748px;height:1px;background:#e4e5e7"></div><div class="abs" style="left:257px;top:1322px;width:81px;height:32px;border-radius:3px;background:#1f75d8"></div><div class="abs t" style="left:268.75px;top:1326.9px;font-size:15.4px;line-height:22px;color:#fff;-webkit-text-stroke:0.35px #fff">Add Ban</div><div class="abs" style="left:347px;top:1322px;width:91px;height:32px;border-radius:3px;background:#1f75d8"></div><div class="abs t" style="left:357.7px;top:1326.9px;font-size:15.4px;line-height:22px;color:#fff;-webkit-text-stroke:0.35px #fff">Add Many</div><svg class="abs" style="left:966px;top:1346px" width="10" height="10" viewBox="0 0 10 10"><path d="M8.5 2 V8.5 H2" stroke="#555" stroke-width="2" fill="none"/></svg><div class="abs ttl" style="left:1033px;top:830.6px;font-size:18.3px;line-height:22px;color:#222;font-weight:normal;letter-spacing:0.25px;-webkit-text-stroke:0.5px #222">Brute Force Attacks</div><div class="abs date" style="left:1219.4px;top:831.1px;font-size:18.6px;line-height:22px;color:#2c74c0;">Apr 26 - May 26</div><svg class="abs" style="left:1363px;top:831px" width="23" height="23" viewBox="0 0 23 23"><path d="M1.6 5 H21.4 V22.2 H1.6 Z" fill="none" stroke="#2a74cf" stroke-width="1.8"/><rect x="1.6" y="5" width="19.8" height="3.6" fill="#2a74cf"/><rect x="5.2" y="1.2" width="2.8" height="5.6" rx="1.4" fill="#fff" stroke="#2a74cf" stroke-width="1.2"/><rect x="15" y="1.2" width="2.8" height="5.6" rx="1.4" fill="#fff" stroke="#2a74cf" stroke-width="1.2"/><rect x="5.3" y="11" width="2.6" height="8.6" fill="#2a74cf"/><rect x="10.2" y="11" width="2.6" height="8.6" fill="#2a74cf"/><rect x="15.1" y="11" width="2.6" height="8.6" fill="#2a74cf"/></svg><div class="abs" style="left:1074.85px;top:897px;width:1.5px;height:383.4000000000001px;background:#666"></div><div class="abs" style="left:1067.6px;top:896.25px;width:8px;height:1.5px;background:#666"></div><div class="abs t" style="left:1005px;top:886.2px;width:60px;text-align:right;font-size:17.5px;line-height:22px;color:#555;">4</div><div class="abs" style="left:1067.6px;top:991.85px;width:8px;height:1.5px;background:#666"></div><div class="abs t" style="left:1005px;top:981.8px;width:60px;text-align:right;font-size:17.5px;line-height:22px;color:#555;">3</div><div class="abs" style="left:1067.6px;top:1087.85px;width:8px;height:1.5px;background:#666"></div><div class="abs t" style="left:1005px;top:1077.8px;width:60px;text-align:right;font-size:17.5px;line-height:22px;color:#555;">2</div><div class="abs" style="left:1067.6px;top:1183.75px;width:8px;height:1.5px;background:#666"></div><div class="abs t" style="left:1005px;top:1173.7px;width:60px;text-align:right;font-size:17.5px;line-height:22px;color:#555;">1</div><div class="abs" style="left:1067.6px;top:1279.65px;width:8px;height:1.5px;background:#666"></div><div class="abs t" style="left:1005px;top:1269.6px;width:60px;text-align:right;font-size:17.5px;line-height:22px;color:#555;">0</div><svg class="abs" style="left:1060px;top:1265px" width="660" height="30" viewBox="1060 1265 660 30"><path d="M1075.6 1280.4 H1696.2" stroke="#d7823f" stroke-width="1.6"/><path d="M1075.60 1280.4 V1288" stroke="#666" stroke-width="1.5"/><path d="M1139.80 1280.4 V1288" stroke="#666" stroke-width="1.5"/><path d="M1204.00 1280.4 V1288" stroke="#666" stroke-width="1.5"/><path d="M1268.20 1280.4 V1288" stroke="#666" stroke-width="1.5"/><path d="M1332.40 1280.4 V1288" stroke="#666" stroke-width="1.5"/><path d="M1396.60 1280.4 V1288" stroke="#666" stroke-width="1.5"/><path d="M1460.80 1280.4 V1288" stroke="#666" stroke-width="1.5"/><path d="M1525.00 1280.4 V1288" stroke="#666" stroke-width="1.5"/><path d="M1610.60 1280.4 V1288" stroke="#666" stroke-width="1.5"/><path d="M1696.20 1280.4 V1288" stroke="#666" stroke-width="1.5"/><circle cx="1075.60" cy="1280.4" r="4.4" fill="#fff" stroke="#d7823f" stroke-width="1.5"/><circle cx="1097.00" cy="1280.4" r="4.4" fill="#fff" stroke="#d7823f" stroke-width="1.5"/><circle cx="1118.40" cy="1280.4" r="4.4" fill="#fff" stroke="#d7823f" stroke-width="1.5"/><circle cx="1139.80" cy="1280.4" r="4.4" fill="#fff" stroke="#d7823f" stroke-width="1.5"/><circle cx="1161.20" cy="1280.4" r="4.4" fill="#fff" stroke="#d7823f" stroke-width="1.5"/><circle cx="1182.60" cy="1280.4" r="4.4" fill="#fff" stroke="#d7823f" stroke-width="1.5"/><circle cx="1204.00" cy="1280.4" r="4.4" fill="#fff" stroke="#d7823f" stroke-width="1.5"/><circle cx="1225.40" cy="1280.4" r="4.4" fill="#fff" stroke="#d7823f" stroke-width="1.5"/><circle cx="1246.80" cy="1280.4" r="4.4" fill="#fff" stroke="#d7823f" stroke-width="1.5"/><circle cx="1268.20" cy="1280.4" r="4.4" fill="#fff" stroke="#d7823f" stroke-width="1.5"/><circle cx="1289.60" cy="1280.4" r="4.4" fill="#fff" stroke="#d7823f" stroke-width="1.5"/><circle cx="1311.00" cy="1280.4" r="4.4" fill="#fff" stroke="#d7823f" stroke-width="1.5"/><circle cx="1332.40" cy="1280.4" r="4.4" fill="#fff" stroke="#d7823f" stroke-width="1.5"/><circle cx="1353.80" cy="1280.4" r="4.4" fill="#fff" stroke="#d7823f" stroke-width="1.5"/><circle cx="1375.20" cy="1280.4" r="4.4" fill="#fff" stroke="#d7823f" stroke-width="1.5"/><circle cx="1396.60" cy="1280.4" r="4.4" fill="#fff" stroke="#d7823f" stroke-width="1.5"/><circle cx="1418.00" cy="1280.4" r="4.4" fill="#fff" stroke="#d7823f" stroke-width="1.5"/><circle cx="1439.40" cy="1280.4" r="4.4" fill="#fff" stroke="#d7823f" stroke-width="1.5"/><circle cx="1460.80" cy="1280.4" r="4.4" fill="#fff" stroke="#d7823f" stroke-width="1.5"/><circle cx="1482.20" cy="1280.4" r="4.4" fill="#fff" stroke="#d7823f" stroke-width="1.5"/><circle cx="1503.60" cy="1280.4" r="4.4" fill="#fff" stroke="#d7823f" stroke-width="1.5"/><circle cx="1525.00" cy="1280.4" r="4.4" fill="#fff" stroke="#d7823f" stroke-width="1.5"/><circle cx="1546.40" cy="1280.4" r="4.4" fill="#fff" stroke="#d7823f" stroke-width="1.5"/><circle cx="1567.80" cy="1280.4" r="4.4" fill="#fff" stroke="#d7823f" stroke-width="1.5"/><circle cx="1589.20" cy="1280.4" r="4.4" fill="#fff" stroke="#d7823f" stroke-width="1.5"/><circle cx="1610.60" cy="1280.4" r="4.4" fill="#fff" stroke="#d7823f" stroke-width="1.5"/><circle cx="1632.00" cy="1280.4" r="4.4" fill="#fff" stroke="#d7823f" stroke-width="1.5"/><circle cx="1653.40" cy="1280.4" r="4.4" fill="#fff" stroke="#d7823f" stroke-width="1.5"/><circle cx="1674.80" cy="1280.4" r="4.4" fill="#fff" stroke="#d7823f" stroke-width="1.5"/><circle cx="1696.20" cy="1280.4" r="4.4" fill="#fff" stroke="#d7823f" stroke-width="1.5"/></svg><div class="abs t" style="left:1025.6px;top:1286.6px;width:100px;text-align:center;font-size:18.3px;line-height:22px;color:#555;">Apr 26</div><div class="abs t" style="left:1089.8px;top:1286.6px;width:100px;text-align:center;font-size:18.3px;line-height:22px;color:#555;">Apr 29</div><div class="abs t" style="left:1154.0px;top:1286.6px;width:100px;text-align:center;font-size:18.3px;line-height:22px;color:#555;">May 2</div><div class="abs t" style="left:1218.2px;top:1286.6px;width:100px;text-align:center;font-size:18.3px;line-height:22px;color:#555;">May 5</div><div class="abs t" style="left:1282.4px;top:1286.6px;width:100px;text-align:center;font-size:18.3px;line-height:22px;color:#555;">May 8</div><div class="abs t" style="left:1346.6px;top:1286.6px;width:100px;text-align:center;font-size:18.3px;line-height:22px;color:#555;">May 11</div><div class="abs t" style="left:1410.8px;top:1286.6px;width:100px;text-align:center;font-size:18.3px;line-height:22px;color:#555;">May 14</div><div class="abs t" style="left:1475.0px;top:1286.6px;width:100px;text-align:center;font-size:18.3px;line-height:22px;color:#555;">May 17</div><div class="abs t" style="left:1560.6px;top:1286.6px;width:100px;text-align:center;font-size:18.3px;line-height:22px;color:#555;">May 21</div><div class="abs t" style="left:1646.2px;top:1286.6px;width:100px;text-align:center;font-size:18.3px;line-height:22px;color:#555;">May 25</div><svg class="abs" style="left:1294px;top:1327px" width="22" height="14" viewBox="0 0 22 14"><path d="M2 7 H20" stroke="#d7823f" stroke-width="2"/><circle cx="11" cy="7" r="4" fill="#fff" stroke="#d7823f" stroke-width="2"/></svg><div class="abs t" style="left:1321.5px;top:1321.6px;font-size:18.1px;line-height:22px;color:#d7823f;">Attacks</div><svg class="abs" style="left:1743px;top:1346px" width="10" height="10" viewBox="0 0 10 10"><path d="M8.5 2 V8.5 H2" stroke="#555" stroke-width="2" fill="none"/></svg><div class="abs ttl" style="left:1808.8px;top:819.0px;font-size:18.3px;line-height:22px;color:#222;font-weight:normal;letter-spacing:0.25px;-webkit-text-stroke:0.5px #222">Database Backups</div><svg class="abs" style="left:1915.5px;top:885px" width="142" height="142" viewBox="0 0 142 142"><circle cx="71" cy="71" r="63.7" fill="none" stroke="#1f75d8" stroke-width="6.8"/></svg><div class="abs t" style="left:1938px;top:926.6px;width:100px;text-align:center;font-size:51px;line-height:51px;height:56px;font-weight:bold;color:#1d1d1d;-webkit-text-stroke:0.8px #1d1d1d"><span style="display:inline-block;transform:scaleX(1.28)">0</span></div><div class="abs t" style="left:1937.0px;top:963.5px;width:100px;text-align:center;font-size:12.9px;line-height:22px;color:#50575e;">BACKUPS</div><div class="abs" style="left:2289px;top:920px;width:110px;height:32px;border-radius:3px;background:#1f75d8"></div><div class="abs t" style="left:2300.4px;top:924.5px;font-size:15.4px;line-height:22px;color:#fff;-webkit-text-stroke:0.35px #fff">Backup Now</div><div class="abs t" style="left:2307.7px;top:966.3px;font-size:15.4px;line-height:22px;color:#2c6fb8;text-decoration:underline">View Logs</div><svg class="abs" style="left:2517px;top:1050px" width="10" height="10" viewBox="0 0 10 10"><path d="M8.5 2 V8.5 H2" stroke="#555" stroke-width="2" fill="none"/></svg><div class="abs ttl" style="left:1809px;top:1128.5px;font-size:18.3px;line-height:22px;color:#222;font-weight:normal;letter-spacing:0.25px;-webkit-text-stroke:0.5px #222">Trusted Devices</div><div class="abs date" style="left:1964.3px;top:1129.1px;font-size:18.6px;line-height:22px;color:#2c74c0;">Apr 26 - May 26</div><svg class="abs" style="left:2107px;top:1128px" width="23" height="23" viewBox="0 0 23 23"><path d="M1.6 5 H21.4 V22.2 H1.6 Z" fill="none" stroke="#2a74cf" stroke-width="1.8"/><rect x="1.6" y="5" width="19.8" height="3.6" fill="#2a74cf"/><rect x="5.2" y="1.2" width="2.8" height="5.6" rx="1.4" fill="#fff" stroke="#2a74cf" stroke-width="1.2"/><rect x="15" y="1.2" width="2.8" height="5.6" rx="1.4" fill="#fff" stroke="#2a74cf" stroke-width="1.2"/><rect x="5.3" y="11" width="2.6" height="8.6" fill="#2a74cf"/><rect x="10.2" y="11" width="2.6" height="8.6" fill="#2a74cf"/><rect x="15.1" y="11" width="2.6" height="8.6" fill="#2a74cf"/></svg><div class="abs" style="left:1850.85px;top:1194px;width:1.5px;height:260px;background:#666"></div><div class="abs" style="left:1843.6px;top:1193.45px;width:8px;height:1.5px;background:#666"></div><div class="abs t" style="left:1781px;top:1183.4px;width:60px;text-align:right;font-size:17.5px;line-height:22px;color:#555;">4</div><div class="abs" style="left:1843.6px;top:1289.25px;width:8px;height:1.5px;background:#666"></div><div class="abs t" style="left:1781px;top:1279.2px;width:60px;text-align:right;font-size:17.5px;line-height:22px;color:#555;">3</div><div class="abs" style="left:1843.6px;top:1384.85px;width:8px;height:1.5px;background:#666"></div><div class="abs t" style="left:1781px;top:1374.8px;width:60px;text-align:right;font-size:17.5px;line-height:22px;color:#555;">2</div><div class="abs ttl" style="left:257px;top:1413.3px;font-size:18.3px;line-height:22px;color:#222;font-weight:normal;letter-spacing:0.25px;-webkit-text-stroke:0.5px #222">User Security Profiles</div><div class="abs t" style="left:1190.6px;top:1413.2px;font-size:17.5px;line-height:22px;color:#3c434a;">Status:</div><div class="abs t" style="left:1256.9px;top:1413.4px;font-size:17px;line-height:22px;color:#2c74c0;">PROTECTED</div>
</body></html>
